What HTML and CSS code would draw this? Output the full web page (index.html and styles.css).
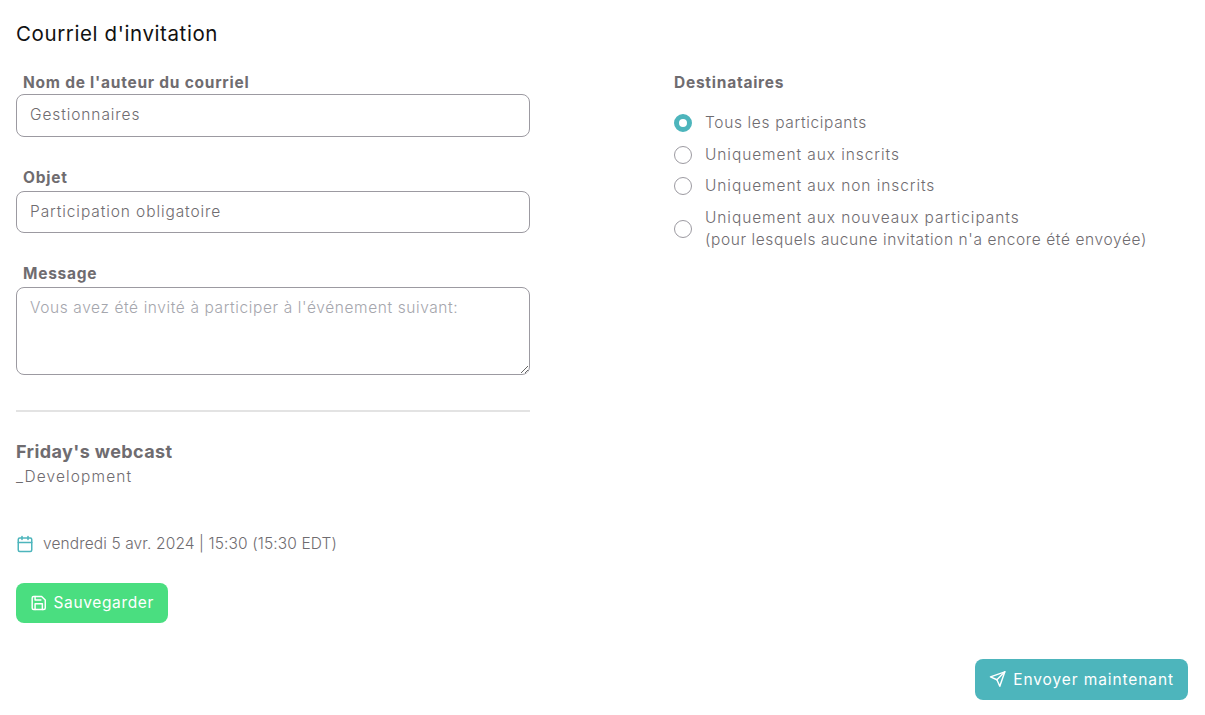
FILE: index.html
```html
<!DOCTYPE html>
<html lang="fr">
<head>
<meta charset="UTF-8">
<meta name="viewport" content="width=device-width, initial-scale=1.0">
<title>Courriel d'invitation</title>
<link rel="stylesheet" href="styles.css">
</head>
<body>

<div class="page">
    <h2 class="pageTitle">Courriel d'invitation</h2>

    <div class="columns">
        <div class="leftColumn">
            <div class="field fieldAuthor">
                <label class="fieldLabel" for="author">Nom de l'auteur du courriel</label>
                <input class="textInput inputAuthor" id="author" type="text" value="Gestionnaires">
            </div>
            <div class="field fieldSubject">
                <label class="fieldLabel" for="subject">Objet</label>
                <input class="textInput inputSubject" id="subject" type="text" value="Participation obligatoire">
            </div>
            <div class="field fieldMessage">
                <label class="fieldLabel" for="message">Message</label>
                <textarea class="textInput messageInput" id="message" placeholder="Vous avez été invité à participer à l'événement suivant:"></textarea>
            </div>

            <hr class="divider">

            <h3 class="eventTitle">Friday's webcast</h3>
            <div class="eventGroup">_Development</div>

            <div class="eventDate">
                <svg class="calendarIcon" width="18" height="18" viewBox="0 0 24 24" fill="none" stroke="currentColor" stroke-width="2" stroke-linecap="round" stroke-linejoin="round">
                    <rect x="3" y="4" width="18" height="18" rx="2"></rect>
                    <line x1="16" y1="2" x2="16" y2="6"></line>
                    <line x1="8" y1="2" x2="8" y2="6"></line>
                    <line x1="3" y1="10" x2="21" y2="10"></line>
                </svg>
                <span>vendredi 5 avr. 2024 | 15:30 (15:30 EDT)</span>
            </div>

            <button class="actionButton saveButton" type="button">
                <svg width="18" height="18" viewBox="0 0 24 24" fill="none" stroke="currentColor" stroke-width="2" stroke-linecap="round" stroke-linejoin="round">
                    <path d="M19 21H5a2 2 0 0 1-2-2V5a2 2 0 0 1 2-2h11l5 5v11a2 2 0 0 1-2 2z"></path>
                    <polyline points="17 21 17 13 7 13 7 21"></polyline>
                    <polyline points="7 3 7 8 15 8"></polyline>
                </svg>
                Sauvegarder
            </button>
        </div>

        <div class="rightColumn">
            <div class="fieldLabel recipientsLabel">Destinataires</div>
            <label class="radioRow rowFirst"><input type="radio" name="recipients" checked><span>Tous les participants</span></label>
            <label class="radioRow"><input type="radio" name="recipients"><span>Uniquement aux inscrits</span></label>
            <label class="radioRow"><input type="radio" name="recipients"><span>Uniquement aux non inscrits</span></label>
            <label class="radioRow"><input type="radio" name="recipients"><span>Uniquement aux nouveaux participants<br><span class="radioNote">(pour lesquels aucune invitation n'a encore été envoyée)</span></span></label>
        </div>
    </div>

    <div class="footer">
        <button class="actionButton sendButton" type="button">
            <svg width="18" height="18" viewBox="0 0 24 24" fill="none" stroke="currentColor" stroke-width="2" stroke-linecap="round" stroke-linejoin="round">
                <line x1="22" y1="2" x2="11" y2="13"></line>
                <polygon points="22 2 15 22 11 13 2 9 22 2"></polygon>
            </svg>
            Envoyer maintenant
        </button>
    </div>
</div>

</body>
</html>
```

FILE: styles.css
```css
* {
    box-sizing: border-box;
}

body {
    margin: 0;
    background-color: #ffffff;
    color: #6f6c70;
    font-family: "Inter", "Open Sans", sans-serif;
    font-size: 15.5px;
    font-weight: 300;
    letter-spacing: 0.65px;
}

.page {
    padding: 22px 17px 15px 16px;
}

.pageTitle {
    margin: 0;
    color: #111111;
    font-size: 20.5px;
    font-weight: 400;
    letter-spacing: 0.6px;
    line-height: 24px;
}

.columns {
    display: grid;
    grid-template-columns: 514px 1fr;
    column-gap: 144px;
    margin-top: 27px;
}

.fieldLabel {
    display: block;
    padding-left: 7px;
    padding-bottom: 1px;
    color: #6f6c70;
    font-weight: 700;
    letter-spacing: 0.75px;
    line-height: 20px;
}

.fieldSubject {
    margin-top: 30px;
}

.fieldMessage {
    margin-top: 30px;
}

.fieldSubject .fieldLabel,
.fieldMessage .fieldLabel {
    padding-bottom: 3px;
    line-height: 21px;
}

.textInput {
    display: block;
    width: 100%;
    padding: 0 13px 2px;
    border: 1px solid #9c9aa1;
    border-radius: 8px;
    background-color: #ffffff;
    color: #6f6c70;
    font-family: inherit;
    font-size: inherit;
    font-weight: inherit;
    letter-spacing: 0.9px;
    outline: none;
}

.inputAuthor {
    height: 43px;
}

.inputSubject {
    height: 42px;
}

.messageInput {
    height: 88px;
    padding-top: 10px;
    letter-spacing: 0.6px;
    line-height: 20px;
}

.messageInput::placeholder {
    color: #a5a6ad;
    opacity: 1;
}

.divider {
    height: 2px;
    margin: 35px 0 0;
    border: none;
    background-color: #e3e3e3;
}

.eventTitle {
    margin: 28px 0 0;
    font-size: 18px;
    font-weight: 700;
    letter-spacing: 0.4px;
    line-height: 24px;
}

.eventGroup {
    margin-top: 3px;
    letter-spacing: 1.1px;
    line-height: 20px;
}

.eventDate {
    display: flex;
    align-items: center;
    gap: 9px;
    margin-top: 47px;
    letter-spacing: 0.12px;
    line-height: 20px;
}

.calendarIcon {
    color: #4db5bc;
}

.actionButton {
    display: inline-flex;
    align-items: center;
    padding-bottom: 2px;
    border: none;
    border-radius: 8px;
    color: #ffffff;
    font-family: inherit;
    font-size: inherit;
    font-weight: 400;
    letter-spacing: 0.65px;
    white-space: nowrap;
}

.saveButton {
    gap: 6px;
    width: 152px;
    height: 40px;
    margin-top: 29px;
    padding-left: 14px;
    padding-right: 14px;
    background-color: #4ade80;
}

.recipientsLabel {
    padding-left: 0;
}

.radioRow {
    display: flex;
    align-items: center;
    gap: 13px;
    margin-top: 9.5px;
    letter-spacing: 0.92px;
    line-height: 22px;
}

.rowFirst {
    margin-top: 18px;
    letter-spacing: 0.65px;
}

.radioNote {
    letter-spacing: 0.6px;
}

.radioRow input {
    flex: none;
    width: 18px;
    height: 18px;
    margin: 0;
    border: 1px solid #9c9aa1;
    border-radius: 50%;
    background-color: #ffffff;
    appearance: none;
}

.radioRow input:checked {
    border: 5.5px solid #4db5bc;
}

.footer {
    display: flex;
    justify-content: flex-end;
    margin-top: 36px;
}

.sendButton {
    gap: 7px;
    width: 213px;
    height: 41px;
    padding-left: 14px;
    padding-right: 14px;
    background-color: #4db5bc;
    letter-spacing: 0.9px;
}
```
